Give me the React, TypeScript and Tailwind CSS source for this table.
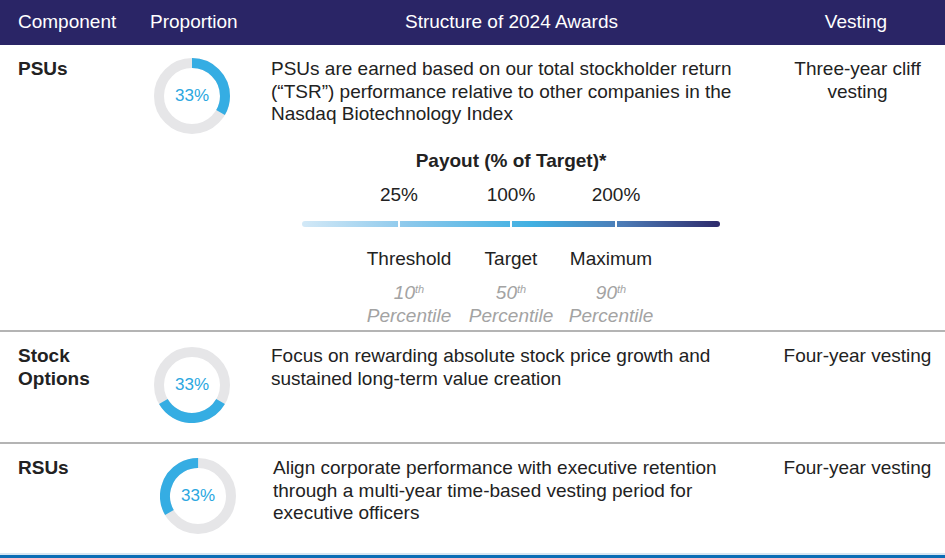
const font = { fontFamily: '"Liberation Sans", Arial, sans-serif' };

function Donut({ rotate }: { rotate: number }) {
  const r = 33;
  const c = 2 * Math.PI * r;
  return (
    <div className="relative h-[76px] w-[76px]">
      <svg width="76" height="76" viewBox="0 0 76 76" className="absolute inset-0">
        <circle cx="38" cy="38" r={r} fill="none" stroke="#e6e6e8" strokeWidth="10" />
        <circle
          cx="38"
          cy="38"
          r={r}
          fill="none"
          stroke="#35ade3"
          strokeWidth="10"
          strokeDasharray={`${c / 3} ${c}`}
          transform={`rotate(${rotate - 90} 38 38)`}
        />
      </svg>
      <div className="absolute inset-0 flex items-center justify-center text-[17px] text-[#2ba7df]">
        33%
      </div>
    </div>
  );
}

const ranks = [
  { label: "Threshold", rank: "10", w: "w-[100px]" },
  { label: "Target", rank: "50", w: "w-[104px]" },
  { label: "Maximum", rank: "90", w: "w-[96px]" },
];

function Payout() {
  return (
    <div className="ml-[31px] w-[418px] leading-[23px]">
      <div className="mt-[23px] text-center font-bold text-[#222]">Payout (% of Target)*</div>
      <div className="mt-[11px] flex pl-[47px]">
        <span className="w-[100px] text-center">25%</span>
        <span className="w-[124px] text-center">100%</span>
        <span className="w-[86px] text-center">200%</span>
      </div>
      <div className="relative mt-[15px] h-[6px] rounded-full bg-[linear-gradient(90deg,#d3e9f7_0%,#8dc9ec_25%,#40b0e2_55%,#4c7ab5_77%,#2d2a6b_100%)]">
        <div className="absolute left-[96px] top-0 h-[6px] w-[2px] bg-white" />
        <div className="absolute left-[208px] top-0 h-[6px] w-[2px] bg-white" />
        <div className="absolute left-[313px] top-0 h-[6px] w-[2px] bg-white" />
      </div>
      <div className="mt-[20px] flex pl-[57px]">
        {ranks.map((m) => (
          <div key={m.label} className={`flex flex-col items-center ${m.w}`}>
            <span className="text-[#222]">{m.label}</span>
            <span className="mt-[11px] italic text-[#a3a3a3]">
              {m.rank}
              <sup className="text-[11px]">th</sup>
            </span>
            <span className="italic text-[#a3a3a3]">Percentile</span>
          </div>
        ))}
      </div>
    </div>
  );
}

export default function App() {
  return (
    <div
      className="flex h-[558px] w-[945px] flex-col bg-white text-[19px] leading-[22.5px] text-[#222]"
      style={font}
    >
      <div className="flex h-[45px] shrink-0 items-center bg-[#2a2566] text-[19px] text-white">
        <div className="w-[140px] pl-[18px]">Component</div>
        <div className="w-[131px] pl-[10px]">Proportion</div>
        <div className="w-[499px] pr-[18px] text-center">Structure of 2024 Awards</div>
        <div className="flex-1 pr-[3px] text-center">Vesting</div>
      </div>

      <div className="flex h-[287px] shrink-0 border-b-2 border-[#b4b4b4]">
        <div className="w-[140px] pl-[18px] pt-[13px] font-bold">PSUs</div>
        <div className="w-[131px] pl-[14px] pt-[13px]">
          <Donut rotate={0} />
        </div>
        <div className="w-[499px] pt-[13px]">
          <p>
            PSUs are earned based on our total stockholder return (“TSR”) performance relative to other companies in
            the Nasdaq Biotechnology Index
          </p>
          <Payout />
        </div>
        <div className="flex-1 pt-[13px] text-center">
          Three-year cliff
          <br />
          vesting
        </div>
      </div>

      <div className="flex h-[112px] shrink-0 border-b-2 border-[#b4b4b4]">
        <div className="w-[140px] pl-[18px] pt-[13px] font-bold">
          Stock
          <br />
          Options
        </div>
        <div className="w-[131px] pl-[14px] pt-[15px]">
          <Donut rotate={120} />
        </div>
        <div className="w-[499px] pt-[13px]">
          Focus on rewarding absolute stock price growth and sustained long-term value creation
        </div>
        <div className="flex-1 pt-[13px] text-center">Four-year vesting</div>
      </div>

      <div className="flex h-[109px] shrink-0">
        <div className="w-[140px] pl-[18px] pt-[13px] font-bold">RSUs</div>
        <div className="w-[131px] pl-[20px] pt-[14px]">
          <Donut rotate={240} />
        </div>
        <div className="w-[499px] pl-[2px] pt-[13px]">
          Align corporate performance with executive retention through a multi-year time-based vesting period for
          executive officers
        </div>
        <div className="flex-1 pt-[13px] text-center">Four-year vesting</div>
      </div>

      <div className="h-[5px] shrink-0 border-t-2 border-[#d6e6f2] bg-[#0b6db5]" />
    </div>
  );
}
